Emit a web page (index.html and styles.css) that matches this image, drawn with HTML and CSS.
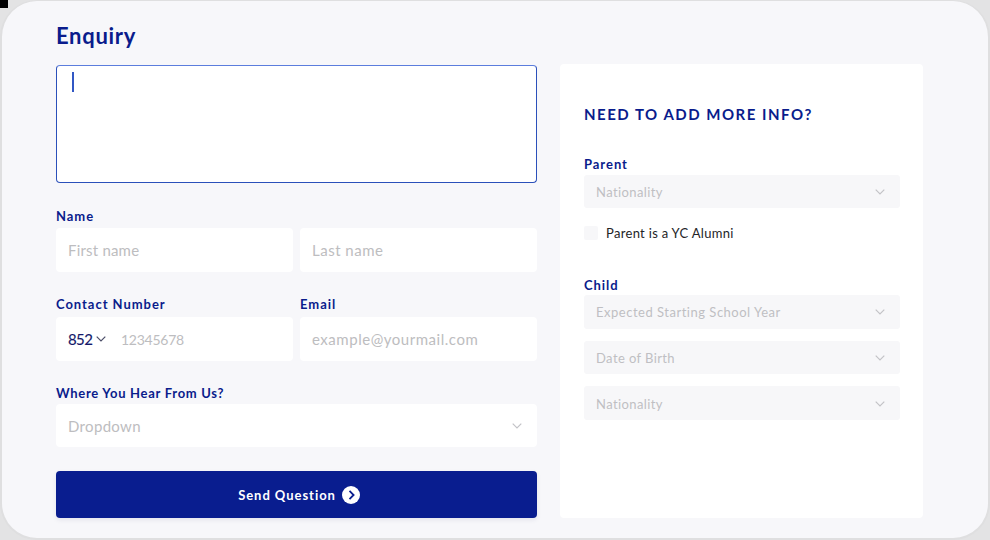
FILE: index.html
```html
<!DOCTYPE html>
<html lang="en">
<head>
<meta charset="utf-8">
<title>Enquiry</title>
<link rel="stylesheet" href="styles.css">
</head>
<body>
<div class="corner"></div>
<main class="window">
  <form class="enquiry">
    <h1 class="title">Enquiry</h1>
    <div class="message"><span class="caret"></span></div>
    <div class="group names">
      <div class="label name-label">Name</div>
      <div class="row">
        <div class="input first">First name</div>
        <div class="input last">Last name</div>
      </div>
    </div>
    <div class="group row contact">
      <div class="field">
        <div class="label">Contact Number</div>
        <div class="input phone">
          <span class="code">852</span>
          <svg class="code-arrow" viewBox="0 0 10 6"><path d="M.7.7 5 5 9.3.7"/></svg>
          <span class="number">12345678</span>
        </div>
      </div>
      <div class="field">
        <div class="label">Email</div>
        <div class="input email">example@yourmail.com</div>
      </div>
    </div>
    <div class="group source">
      <div class="label source-label">Where You Hear From Us?</div>
      <div class="input dropdown"><span>Dropdown</span><svg class="arrow" viewBox="0 0 10 6"><path d="M.7.7 5 5 9.3.7"/></svg></div>
    </div>
    <div class="send">
      <span>Send Question</span>
      <svg class="send-icon" viewBox="0 0 18 18"><circle cx="9" cy="9" r="9"/><path d="M7.5 4.9 11.6 9 7.5 13.1"/></svg>
    </div>
  </form>
  <aside class="panel">
    <h2 class="panel-title">NEED TO ADD MORE INFO?</h2>
    <div class="label parent-label">Parent</div>
    <div class="select"><span>Nationality</span><svg class="arrow" viewBox="0 0 10 6"><path d="M.7.7 5 5 9.3.7"/></svg></div>
    <div class="check"><span class="box"></span><span>Parent is a YC Alumni</span></div>
    <div class="label child-label">Child</div>
    <div class="selects">
      <div class="select year"><span>Expected Starting School Year</span><svg class="arrow" viewBox="0 0 10 6"><path d="M.7.7 5 5 9.3.7"/></svg></div>
      <div class="select"><span>Date of Birth</span><svg class="arrow" viewBox="0 0 10 6"><path d="M.7.7 5 5 9.3.7"/></svg></div>
      <div class="select last-select"><span>Nationality</span><svg class="arrow" viewBox="0 0 10 6"><path d="M.7.7 5 5 9.3.7"/></svg></div>
    </div>
  </aside>
</main>
</body>
</html>
```

FILE: styles.css
```css
* { box-sizing: border-box; }

body {
  margin: 0;
  height: 540px;
  overflow: hidden;
  background: #e3e3e4;
  font-family: Lato, "Liberation Sans", sans-serif;
  color: #0a1c8c;
}

.corner {
  position: absolute;
  top: 0;
  left: 0;
  width: 8px;
  height: 8px;
  background: #000;
}

.window {
  display: flex;
  gap: 23px;
  width: 990px;
  height: 540px;
  padding: 0 0 0 54px;
  border: 2px solid #dfdfe0;
  border-width: 1px 2px 2px;
  border-radius: 37px;
  background: #f7f7fa;
}

.enquiry { width: 481px; }

.title {
  margin: 20px 0 14px;
  font-size: 22px;
  line-height: 30px;
  font-weight: 700;
  letter-spacing: .7px;
}

.message {
  height: 118px;
  padding: 6px 15px;
  border: 1px solid #2b50ba;
  border-top-color: #5b7ddd;
  border-radius: 4px;
  background: #fff;
}

.caret {
  display: block;
  width: 2px;
  height: 20px;
  background: #3157c4;
}

.label {
  height: 24px;
  font-size: 13px;
  line-height: 24px;
  font-weight: 700;
  letter-spacing: .96px;
}

.row { display: flex; gap: 7px; }
.row > * { flex: 1; }
.names { margin-top: 21px; }
.contact { margin-top: 21px; }
.contact .label { line-height: 23px; }
.source { margin-top: 20px; }
.source-label { height: 23px; line-height: 25px; letter-spacing: .71px; }

.input {
  display: flex;
  align-items: center;
  height: 44px;
  padding: 0 12px;
  border-radius: 4px;
  background: #fff;
  color: #bdbdc0;
  font-size: 15px;
  letter-spacing: .33px;
}

.first { letter-spacing: .2px; }
.last { letter-spacing: .5px; }
.email { letter-spacing: .53px; }
.phone { padding-right: 0; }
.dropdown { height: 43px; padding-right: 15px; justify-content: space-between; }

.code {
  width: 25px;
  color: #14196a;
  letter-spacing: -.6px;
  -webkit-text-stroke: .15px #14196a;
}

.code-arrow {
  width: 10px;
  height: 6px;
  margin: 0 15px 0 3px;
  overflow: visible;
  fill: none;
  stroke: #4c4e68;
  stroke-width: 1.2;
}

.number { font-size: 14px; letter-spacing: -.25px; }

.arrow {
  width: 10px;
  height: 6px;
  overflow: visible;
  fill: none;
  stroke: #c3c3c7;
  stroke-width: 1.2;
}

.send {
  display: flex;
  align-items: center;
  justify-content: center;
  gap: 6px;
  height: 47px;
  margin-top: 24px;
  padding-left: 5px;
  border-radius: 4px;
  background: #091d8f;
  box-shadow: 0 2px 5px rgba(20, 30, 90, .08);
  color: #fff;
  font-size: 13px;
  font-weight: 700;
  letter-spacing: .96px;
}

.send-icon { width: 18px; height: 18px; }
.send-icon circle { fill: #fff; }
.send-icon path { fill: none; stroke: #091d8f; stroke-width: 1.8; }

.panel {
  width: 363px;
  height: 454px;
  margin-top: 63px;
  padding: 40px 23px 0 24px;
  border-radius: 4px;
  background: #fff;
}

.panel-title {
  margin: 0 0 29px;
  font-size: 15px;
  line-height: 20px;
  letter-spacing: 1.51px;
}

.parent-label { height: 22px; line-height: 23px; }
.child-label { height: 21px; margin-top: 34px; line-height: 22px; }

.select {
  display: flex;
  align-items: center;
  justify-content: space-between;
  height: 33px;
  padding: 1px 15px 0 12px;
  border-radius: 3px;
  background: #f7f7f9;
  color: #bfbfc3;
  font-size: 13px;
  letter-spacing: .4px;
}

.check {
  display: flex;
  align-items: center;
  gap: 8px;
  height: 14px;
  margin-top: 18px;
  color: #242426;
  font-size: 13px;
  line-height: 14px;
  letter-spacing: .31px;
}

.box {
  width: 14px;
  height: 14px;
  border-radius: 2px;
  background: #f7f7f9;
}

.selects { display: grid; gap: 12px; }
.year { height: 34px; padding-top: 0; letter-spacing: .51px; }
.last-select { height: 34px; }
```
